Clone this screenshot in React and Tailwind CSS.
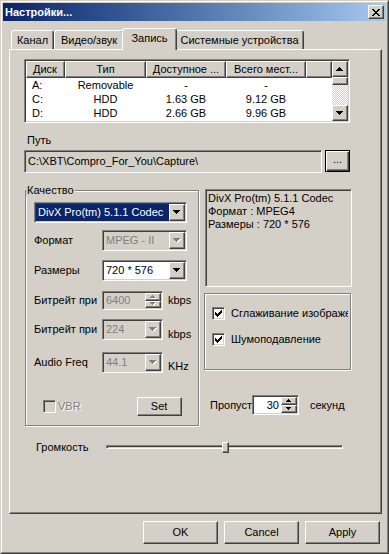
const raised =
  'border border-t-white border-l-white border-r-[#404040] border-b-[#404040] shadow-[inset_-1px_-1px_0_#808080,inset_1px_1px_0_#d4d0c8]'
const sunken =
  'border border-t-[#808080] border-l-[#808080] border-r-white border-b-white shadow-[inset_1px_1px_0_#404040,inset_-1px_-1px_0_#d4d0c8]'
const etched = 'border border-[#808080] shadow-[inset_1px_1px_0_#fff,1px_1px_0_#fff]'

const DOWN = 'M0 0h7v1H0zM1 1h5v1H1zM2 2h3v1H2zM3 3h1v1H3z'
const UP = 'M3 0h1v1H3zM2 1h3v1H2zM1 2h5v1H1zM0 3h7v1H0z'
const SDOWN = 'M0 0h5v1H0zM1 1h3v1H1zM2 2h1v1H2z'
const SUP = 'M2 0h1v1H2zM1 1h3v1H1zM0 2h5v1H0z'

function Glyph({ d, w, h, disabled }) {
  return (
    <svg width={w + 1} height={h + 1} viewBox={`0 0 ${w + 1} ${h + 1}`} shapeRendering="crispEdges">
      {disabled && <path d={d} fill="#fff" transform="translate(1,1)" />}
      <path d={d} fill={disabled ? '#808080' : '#000'} />
    </svg>
  )
}

function DropBtn({ disabled }) {
  return (
    <div className={`${raised} w-[16px] h-full bg-[#d4d0c8] flex items-center justify-center`}>
      <Glyph d={DOWN} w={7} h={4} disabled={disabled} />
    </div>
  )
}

function Combo({ className, text, variant }) {
  const area =
    variant === 'selected'
      ? 'bg-[#0a246a] text-white'
      : variant === 'disabled'
        ? 'bg-[#d4d0c8] text-[#808080]'
        : 'bg-white text-black'
  return (
    <div className={`${sunken} ${className} p-px flex ${variant === 'disabled' ? 'bg-[#d4d0c8]' : 'bg-white'}`}>
      <div className={`flex-1 flex items-center pl-[2px] whitespace-nowrap overflow-hidden ${area}`}>{text}</div>
      <DropBtn disabled={variant === 'disabled'} />
    </div>
  )
}

function Spin({ className, text, disabled, right }) {
  return (
    <div className={`${sunken} ${className} p-px flex ${disabled ? 'bg-[#d4d0c8]' : 'bg-white'}`}>
      <div
        className={`flex-1 flex items-center whitespace-nowrap ${right ? 'justify-end pr-[2px]' : 'pl-[2px]'} ${
          disabled ? 'text-[#808080]' : 'text-black'
        }`}
      >
        {text}
      </div>
      <div className="w-[16px] flex flex-col">
        <div className={`${raised} flex-1 bg-[#d4d0c8] flex items-center justify-center`}>
          <Glyph d={SUP} w={5} h={3} disabled={disabled} />
        </div>
        <div className={`${raised} flex-1 bg-[#d4d0c8] flex items-center justify-center`}>
          <Glyph d={SDOWN} w={5} h={3} disabled={disabled} />
        </div>
      </div>
    </div>
  )
}

function Check({ checked, disabled }) {
  return (
    <div className={`${sunken} w-[13px] h-[13px] p-px shrink-0 flex items-center justify-center ${disabled ? 'bg-[#d4d0c8]' : 'bg-white'}`}>
      {checked && (
        <svg width="7" height="7" viewBox="0 0 7 7" shapeRendering="crispEdges">
          <path d="M6 0h1v3H6zM5 1h1v3H5zM4 2h1v3H4zM3 3h1v3H3zM2 4h1v3H2zM1 3h1v3H1zM0 2h1v3H0z" fill="#000" />
        </svg>
      )}
    </div>
  )
}

function Button({ className, children, def }) {
  return (
    <div
      className={`${
        def
          ? 'border border-black shadow-[inset_1px_1px_0_#fff,inset_-1px_-1px_0_#404040,inset_-2px_-2px_0_#808080]'
          : raised
      } ${className} bg-[#d4d0c8] flex items-center justify-center`}
    >
      {children}
    </div>
  )
}

const drives = [
  ['A:', 'Removable', '-', '-'],
  ['C:', 'HDD', '1.63 GB', '9.12 GB'],
  ['D:', 'HDD', '2.66 GB', '9.96 GB'],
]

function DriveList() {
  const cols = ['w-[39px]', 'w-[81px]', 'w-[80px]', 'w-[80px]']
  return (
    <div className={`${sunken} w-[326px] h-[64px] p-px bg-white flex`}>
      <div className="flex-1 flex flex-col overflow-hidden">
        <div className="flex h-[17px] shrink-0">
          <div className={`${raised} ${cols[0]} bg-[#d4d0c8] flex items-center pl-[6px]`}>Диск</div>
          <div className={`${raised} ${cols[1]} bg-[#d4d0c8] flex items-center justify-center`}>Тип</div>
          <div className={`${raised} ${cols[2]} bg-[#d4d0c8] flex items-center justify-center whitespace-nowrap`}>Доступное ...</div>
          <div className={`${raised} ${cols[3]} bg-[#d4d0c8] flex items-center justify-center whitespace-nowrap`}>Всего мест...</div>
          <div className={`${raised} flex-1 bg-[#d4d0c8]`} />
        </div>
        {drives.map((r) => (
          <div key={r[0]} className="flex h-[14px] items-center shrink-0">
            <div className={`${cols[0]} pl-[6px]`}>{r[0]}</div>
            <div className={`${cols[1]} text-center`}>{r[1]}</div>
            <div className={`${cols[2]} text-center`}>{r[2]}</div>
            <div className={`${cols[3]} text-center`}>{r[3]}</div>
          </div>
        ))}
      </div>
      <div className="w-[16px] flex flex-col">
        <div className={`${raised} h-[16px] bg-[#d4d0c8] flex items-center justify-center`}>
          <Glyph d={UP} w={7} h={4} />
        </div>
        <div className={`${raised} h-[8px] bg-[#d4d0c8]`} />
        <div className="flex-1 bg-[repeating-conic-gradient(#fff_0_25%,#d4d0c8_0_50%)] bg-[length:2px_2px]" />
        <div className={`${raised} h-[16px] bg-[#d4d0c8] flex items-center justify-center`}>
          <Glyph d={DOWN} w={7} h={4} />
        </div>
      </div>
    </div>
  )
}

function Tab({ children, className, active }) {
  return (
    <div
      className={`${className} rounded-t-[3px] border-t border-l border-r border-t-white border-l-white border-r-[#404040] shadow-[inset_-1px_0_0_#808080] bg-[#d4d0c8] flex justify-center ${
        active ? 'h-[22px] relative z-10 pt-[3px]' : 'h-[19px] mt-[2px] pt-[3px]'
      }`}
    >
      {children}
    </div>
  )
}

export default function App() {
  return (
    <div className="w-[389px] h-[554px] bg-[#d4d0c8] border border-t-[#d4d0c8] border-l-[#d4d0c8] border-r-[#404040] border-b-[#404040] font-['Liberation_Sans',Arial,sans-serif] text-[11px] leading-[13px] text-black select-none">
      <div className="h-full border border-t-white border-l-white border-r-[#808080] border-b-[#808080] p-px flex flex-col">
        <div className="h-[18px] shrink-0 bg-linear-to-r from-[#0a246a] to-[#a6caf0] flex items-center justify-between pl-[2px] pr-[2px]">
          <span className="text-white font-bold text-[11px]">Настройки...</span>
          <div className={`${raised} w-[16px] h-[14px] bg-[#d4d0c8] flex items-center justify-center`}>
            <svg width="8" height="7" viewBox="0 0 8 7" shapeRendering="crispEdges">
              <path
                d="M0 0h2v1H0zM6 0h2v1H6zM1 1h2v1H1zM5 1h2v1H5zM2 2h4v1H2zM3 3h2v1H3zM2 4h4v1H2zM1 5h2v1H1zM5 5h2v1H5zM0 6h2v1H0zM6 6h2v1H6z"
                fill="#000"
              />
            </svg>
          </div>
        </div>

        <div className="flex items-start h-[21px] mt-[7px] ml-[8px] shrink-0">
          <Tab className="w-[43px]">Канал</Tab>
          <Tab className="w-[70px]">Видео/звук</Tab>
          <Tab className="w-[55px] -ml-[2px]" active>
            Запись
          </Tab>
          <Tab className="w-[129px] -ml-[2px]">Системные устройства</Tab>
        </div>

        <div className="ml-[6px] w-[373px] h-[465px] shrink-0 border border-t-white border-l-white border-r-[#404040] border-b-[#404040] shadow-[inset_-1px_-1px_0_#808080] pl-[14px] pt-[9px] flex flex-col">
          <DriveList />

          <div className="mt-[11px] ml-[3px]">Путь</div>
          <div className="mt-[3px] flex">
            <div className={`${sunken} w-[298px] h-[23px] p-px flex items-center pl-[3px] bg-[#d4d0c8]`}>
              C:\XBT\Compro_For_You\Capture\
            </div>
            <Button className="ml-[3px] w-[25px] h-[22px] pb-[3px]" def>
              ...
            </Button>
          </div>

          <div className="mt-[16px] flex items-start">
            <div className={`${etched} mt-px ml-px w-[174px] h-[236px] flex flex-col`}>
              <div className="-mt-[7px] w-fit px-px bg-[#d4d0c8]">Качество</div>
              <Combo className="mt-[5px] ml-[8px] w-[153px] h-[21px]" text="DivX Pro(tm) 5.1.1 Codec" variant="selected" />

              <div className="mt-[7px] ml-[8px] flex items-center">
                <span className="w-[68px]">Формат</span>
                <Combo className="w-[85px] h-[21px]" text="MPEG - II" variant="disabled" />
              </div>
              <div className="mt-[9px] ml-[8px] flex items-center">
                <span className="w-[68px]">Размеры</span>
                <Combo className="w-[85px] h-[21px]" text="720 * 576" />
              </div>
              <div className="mt-[10px] ml-[8px] flex items-center">
                <span className="w-[68px]">Битрейт при</span>
                <Spin className="w-[61px] h-[19px]" text="6400" disabled />
                <span className="ml-[5px]">kbps</span>
              </div>
              <div className="mt-[9px] ml-[8px] flex items-center">
                <span className="w-[68px]">Битрейт при</span>
                <Combo className="w-[61px] h-[21px]" text="224" variant="disabled" />
                <span className="ml-[5px] self-end -mb-[1px]">kbps</span>
              </div>
              <div className="mt-[12px] ml-[8px] flex items-center">
                <span className="w-[68px]">Audio Freq</span>
                <Combo className="w-[61px] h-[21px]" text="44.1" variant="disabled" />
                <span className="ml-[5px] self-end">KHz</span>
              </div>
              <div className="mt-[24px] flex items-center">
                <div className="ml-[17px]">
                  <Check disabled />
                </div>
                <span className="ml-[2px] text-[#808080] [text-shadow:1px_1px_0_#fff]">VBR</span>
                <Button className="ml-[56px] w-[45px] h-[19px]">Set</Button>
              </div>
            </div>

            <div className="ml-[6px] flex flex-col">
              <div className={`${sunken} w-[147px] h-[98px] p-px pl-[2px] pt-[2px] bg-[#d4d0c8] flex flex-col`}>
                <span>DivX Pro(tm) 5.1.1 Codec</span>
                <span>Формат : MPEG4</span>
                <span>Размеры : 720 * 576</span>
              </div>

              <div className={`${etched} mt-[6px] -ml-px w-[147px] h-[77px] flex flex-col`}>
                <div className="mt-[13px] ml-[7px] w-[136px] flex items-center overflow-hidden whitespace-nowrap">
                  <Check checked />
                  <span className="ml-[6px]">Сглаживание изображения</span>
                </div>
                <div className="mt-[13px] ml-[7px] flex items-center whitespace-nowrap">
                  <Check checked />
                  <span className="ml-[6px]">Шумоподавление</span>
                </div>
              </div>

              <div className="mt-[25px] ml-[5px] flex items-center">
                <span className="w-[42px] whitespace-nowrap">Пропуст</span>
                <Spin className="w-[47px] h-[20px]" text="30" right />
                <span className="ml-[11px]">секунд</span>
              </div>
            </div>
          </div>

          <div className="mt-[11px] ml-[12px] h-[20px] flex items-center">
            <span className="w-[70px]">Громкость</span>
            <div className="relative w-[237px] h-[11px] flex items-center">
              <div className="w-full h-[4px] border-t border-l border-t-[#808080] border-l-[#808080] border-b border-r border-b-white border-r-white shadow-[inset_1px_1px_0_#404040]" />
              <div className={`${raised} absolute left-[116px] top-0 w-[7px] h-[11px] bg-[#d4d0c8]`} />
            </div>
          </div>
        </div>

        <div className="mt-[7px] pr-[6px] flex justify-end gap-[6px]">
          <Button className="w-[75px] h-[23px]">OK</Button>
          <Button className="w-[75px] h-[23px]">Cancel</Button>
          <Button className="w-[75px] h-[23px]">Apply</Button>
        </div>
      </div>
    </div>
  )
}
